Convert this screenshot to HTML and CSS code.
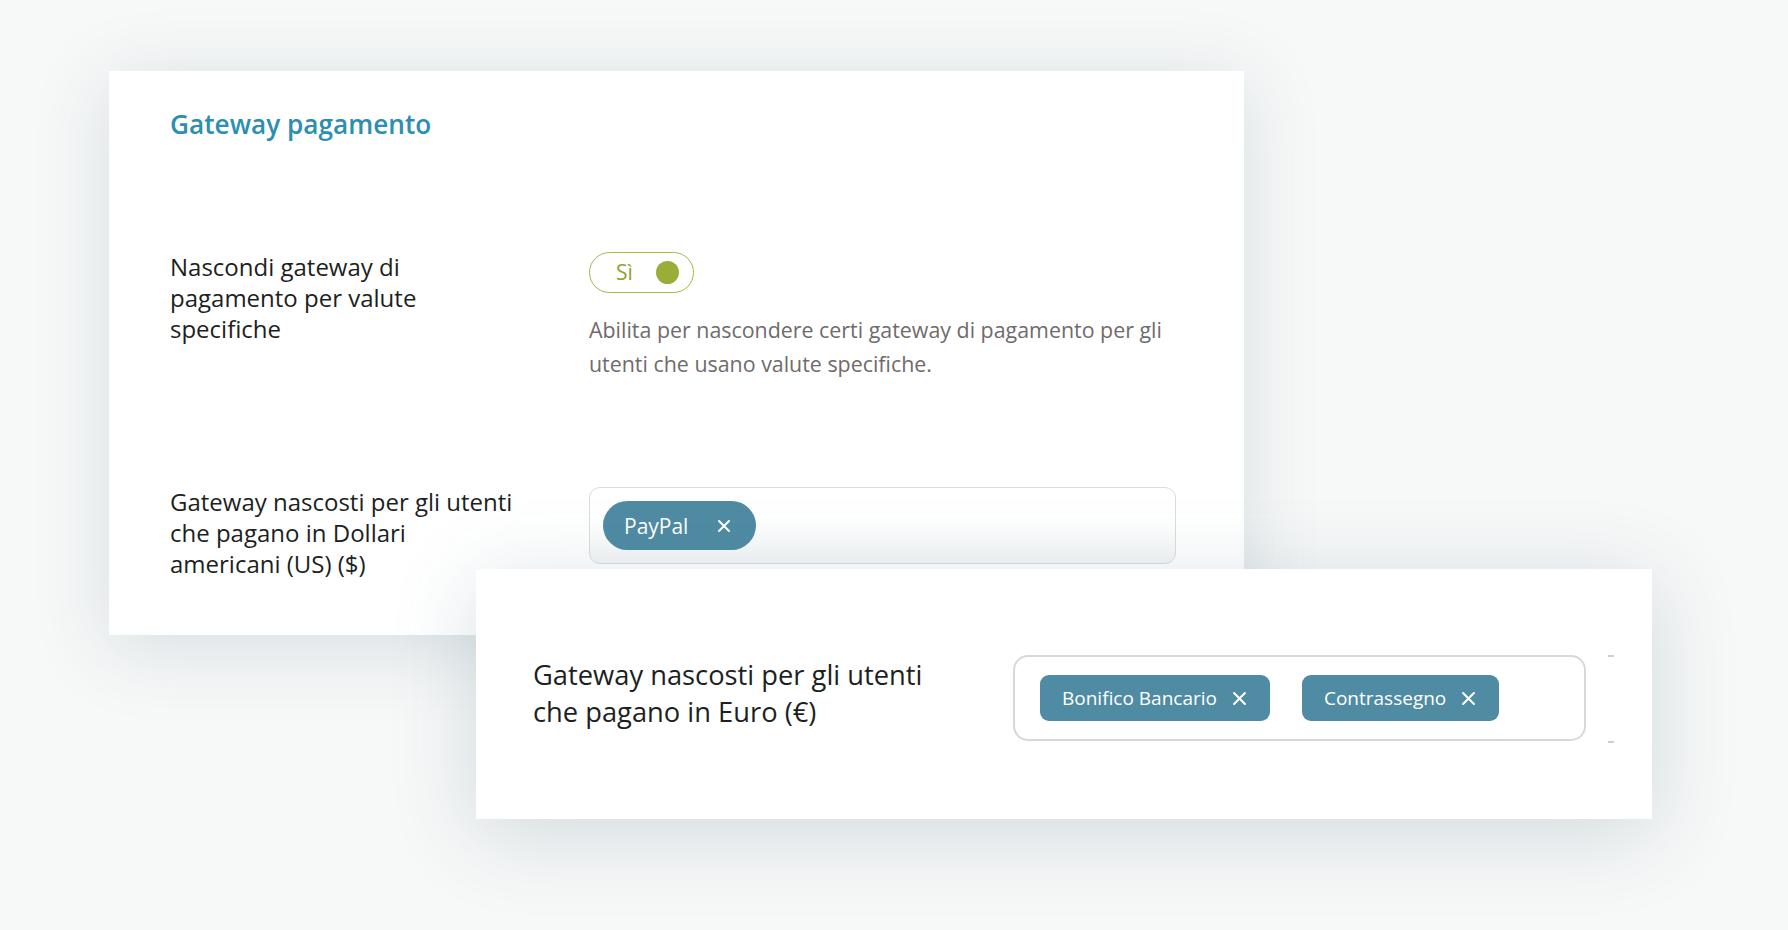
FILE: index.html
```html
<!DOCTYPE html>
<html lang="it">
<head>
<meta charset="utf-8">
<title>Gateway pagamento</title>
<link rel="stylesheet" href="styles.css">
</head>
<body>
<div class="stage">
  <section class="card card-main">
    <h2 class="card-title">Gateway pagamento</h2>
    <div class="row row-toggle">
      <div class="label">Nascondi gateway di pagamento per valute specifiche</div>
      <div class="control">
        <div class="toggle"><span class="toggle-text">Sì</span><span class="toggle-knob"></span></div>
        <p class="desc">Abilita per nascondere certi gateway di pagamento per gli utenti che usano valute specifiche.</p>
      </div>
    </div>
    <div class="row row-select">
      <div class="label">Gateway nascosti per gli utenti che pagano in Dollari americani (US) ($)</div>
      <div class="control">
        <div class="select select-sm">
          <span class="chip chip-pill">PayPal<svg class="chip-x" viewBox="0 0 12 12" width="12" height="12"><path d="M1 1 L11 11 M11 1 L1 11" stroke="#fff" stroke-width="2" stroke-linecap="round" fill="none"/></svg></span>
        </div>
      </div>
    </div>
  </section>
  <section class="card card-euro">
    <div class="row-euro">
      <div class="label label-lg">Gateway nascosti per gli utenti che pagano in Euro (€)</div>
      <div class="select select-lg">
        <span class="chip chip-sq">Bonifico Bancario<svg class="chip-x" viewBox="0 0 12 12" width="13" height="13"><path d="M1 1 L11 11 M11 1 L1 11" stroke="#fff" stroke-width="1.9" stroke-linecap="round" fill="none"/></svg></span>
        <span class="chip chip-sq">Contrassegno<svg class="chip-x" viewBox="0 0 12 12" width="13" height="13"><path d="M1 1 L11 11 M11 1 L1 11" stroke="#fff" stroke-width="1.9" stroke-linecap="round" fill="none"/></svg></span>
      </div>
      <div class="ticks"><span class="tick"></span><span class="tick"></span></div>
    </div>
  </section>
</div>
</body>
</html>
```
FILE: styles.css
```css
* { box-sizing: border-box; }
html, body {
  margin: 0;
  padding: 0;
}
body {
  width: 1788px;
  height: 930px;
  overflow: hidden;
  background: #f7f8f8;
  font-family: "Open Sans", "Noto Sans", sans-serif;
  color: #1d1f22;
}
.stage {
  padding: 71px 0 0 109px;
}
.card {
  background: #ffffff;
  box-shadow: 0 12px 70px rgba(60, 100, 118, 0.17);
}
.card-main {
  width: 1135px;
  height: 564px;
  padding: 35px 68px 0 61px;
}
.card-title {
  margin: 0;
  font-size: 26.2px;
  line-height: 36px;
  font-weight: 600;
  color: #2c8eb2;
}
.row {
  display: flex;
}
.row-toggle {
  margin-top: 110px;
}
.row-select {
  margin-top: 106px;
}
.label {
  width: 352px;
  flex: none;
  font-size: 24px;
  line-height: 30.8px;
  font-weight: 500;
  margin-right: 67px;
}
.control {
  flex: 1;
}
.toggle {
  width: 105px;
  height: 41px;
  border: 1.5px solid #a7b645;
  border-radius: 21px;
  display: flex;
  align-items: center;
  justify-content: space-between;
  padding: 0 14px 0 26px;
}
.toggle-text {
  font-size: 21px;
  color: #8ea32e;
  line-height: 1;
}
.toggle-knob {
  width: 23px;
  height: 23px;
  border-radius: 50%;
  background: #9aad38;
}
.desc {
  margin: 20px 0 0;
  font-size: 21.4px;
  line-height: 34px;
  color: #6f6b6c;
}
.select {
  display: flex;
  align-items: center;
  background: #fff;
}
.select-sm {
  height: 77px;
  border: 1px solid #dcdcdc;
  border-radius: 11px;
  padding: 0 13px;
  background: linear-gradient(#ffffff 45%, #f4f6f7);
}
.chip {
  display: inline-flex;
  align-items: center;
  background: #4f8ba3;
  color: #ffffff;
  font-weight: 400;
}
.chip-x {
  display: block;
  flex: none;
}
.chip-pill {
  height: 49px;
  border-radius: 25px;
  padding: 0 26px 0 21px;
  font-size: 21px;
}
.chip-pill .chip-x {
  margin-left: 30px;
}
.card-euro {
  position: relative;
  width: 1176px;
  height: 250px;
  margin: -66px 0 0 367px;
  padding: 86px 0 0 57px;
  box-shadow: 0 14px 80px rgba(60, 100, 118, 0.2);
}
.row-euro {
  display: flex;
  align-items: flex-start;
}
.label-lg {
  width: 400px;
  font-size: 27.3px;
  line-height: 37px;
  padding-top: 1px;
  margin-right: 80px;
}
.select-lg {
  width: 573px;
  height: 86px;
  border: 2px solid #d8d8d8;
  border-radius: 15px;
  padding: 0 25px;
  gap: 32px;
}
.chip-sq {
  height: 46px;
  border-radius: 9px;
  padding: 0 24px 0 22px;
  font-size: 19px;
}
.chip-sq .chip-x {
  margin-left: 16px;
}
.ticks {
  height: 88px;
  margin-left: 22px;
  display: flex;
  flex-direction: column;
  justify-content: space-between;
}
.tick {
  width: 6px;
  height: 2px;
  background: #cfcfcf;
}
```
